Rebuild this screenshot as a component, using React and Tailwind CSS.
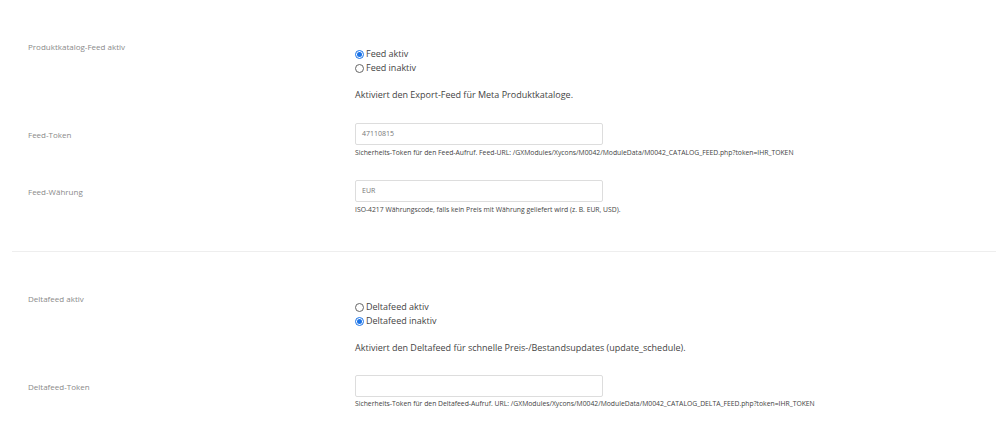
const Radio = ({ checked, label }) => (
  <label className="flex items-center h-[14px] text-[9px] text-[#444]">
    {checked ? (
      <span className="w-[9px] h-[9px] rounded-full border border-[#1a73e8] bg-white flex items-center justify-center mr-[2px]">
        <span className="w-[5px] h-[5px] rounded-full bg-[#1a73e8]" />
      </span>
    ) : (
      <span className="w-[9px] h-[9px] rounded-full border border-[#666] bg-white mr-[2px]" />
    )}
    {label}
  </label>
);

const Label = ({ children, pad }) => (
  <div className={`w-[343px] shrink-0 pl-4 text-[8px] leading-[12px] text-[#8a8a8a] ${pad}`}>{children}</div>
);

const Input = ({ value }) => (
  <div className="w-[248px] h-[22px] border border-[#ddd] rounded-[2px] px-[6px] flex items-center text-[7px] text-[#777]">
    {value}
  </div>
);

const Help = ({ children, mt }) => (
  <p className={`text-[6.8px] leading-[10px] text-[#444] ${mt}`}>{children}</p>
);

export default function App() {
  return (
    <div className="w-[1000px] h-[430px] bg-white pl-3 pr-1 overflow-hidden" style={{ fontFamily: '"Open Sans", "Liberation Sans", sans-serif' }}>
      <div className="pt-[41px] pb-[36px]">
        <div className="flex">
          <Label>Produktkatalog-Feed aktiv</Label>
          <div className="pt-[6px]">
            <Radio checked label="Feed aktiv" />
            <Radio label="Feed inaktiv" />
            <p className="mt-[14px] text-[9px] leading-[12px] text-[#444]">Aktiviert den Export-Feed für Meta Produktkataloge.</p>
          </div>
        </div>
        <div className="flex mt-[22px]">
          <Label pad="pt-[6px]">Feed-Token</Label>
          <div>
            <Input value="47110815" />
            <Help mt="mt-[3px]">Sicherheits-Token für den Feed-Aufruf. Feed-URL: /GXModules/Xycons/M0042/ModuleData/M0042_CATALOG_FEED.php?token=IHR_TOKEN</Help>
          </div>
        </div>
        <div className="flex mt-[22px]">
          <Label pad="pt-[6px]">Feed-Währung</Label>
          <div>
            <Input value="EUR" />
            <Help mt="mt-[3px]">ISO-4217 Währungscode, falls kein Preis mit Währung geliefert wird (z. B. EUR, USD).</Help>
          </div>
        </div>
      </div>
      <div className="border-t border-[#eee] pt-[41px]">
        <div className="flex">
          <Label>Deltafeed aktiv</Label>
          <div className="pt-[7px]">
            <Radio label="Deltafeed aktiv" />
            <Radio checked label="Deltafeed inaktiv" />
            <p className="mt-[14px] text-[9px] leading-[12px] text-[#444]">Aktiviert den Deltafeed für schnelle Preis-/Bestandsupdates (update_schedule).</p>
          </div>
        </div>
        <div className="flex mt-[21px]">
          <Label pad="pt-[6px]">Deltafeed-Token</Label>
          <div>
            <Input value="" />
            <Help mt="mt-[2px]">Sicherheits-Token für den Deltafeed-Aufruf. URL: /GXModules/Xycons/M0042/ModuleData/M0042_CATALOG_DELTA_FEED.php?token=IHR_TOKEN</Help>
          </div>
        </div>
      </div>
    </div>
  );
}
